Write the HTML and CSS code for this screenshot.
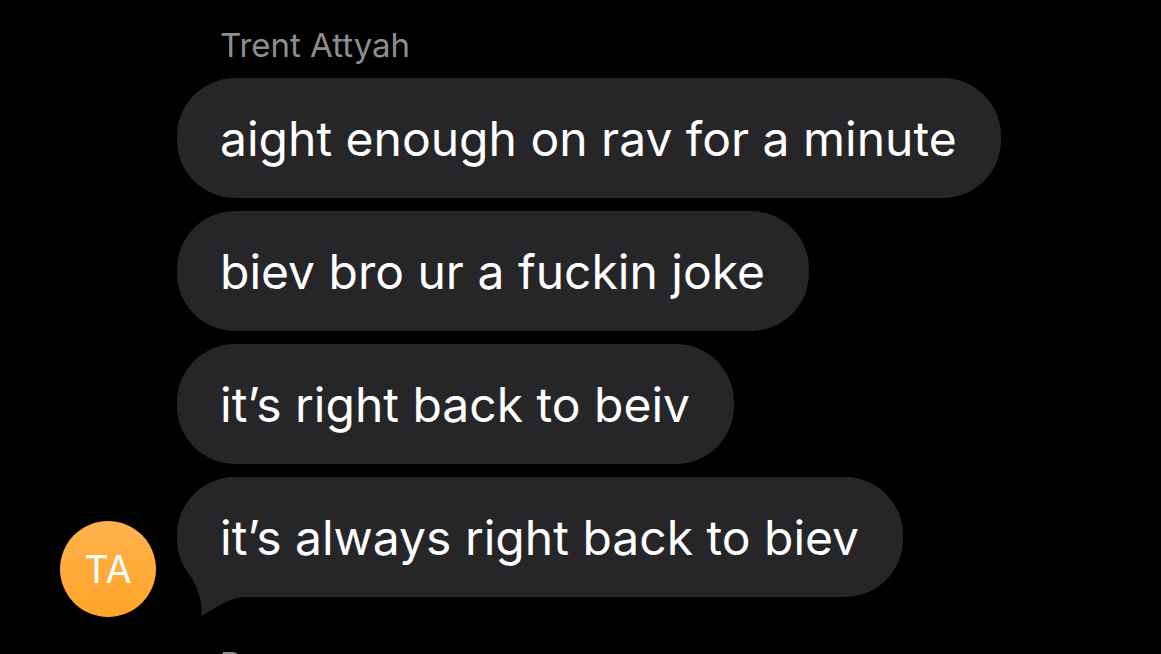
FILE: index.html
```html
<!DOCTYPE html>
<html>
<head>
<meta charset="utf-8">
<link rel="stylesheet" href="styles.css">
</head>
<body>
<div class="thread">
  <div class="group">
    <div class="sender">Trent Attyah</div>
    <div class="row">
      <div class="avatar">TA</div>
      <div class="stack">
        <div class="bubble">aight enough on rav for a minute</div>
        <div class="bubble">biev bro ur a fuckin joke</div>
        <div class="bubble">it’s right back to beiv</div>
        <div class="bubble last">it’s always right back to biev
          <svg class="tail" width="80" height="60" viewBox="0 80 80 60"><path d="M12 96 C20 110 27 126 24 139 C34 134 45 124 65 120 L40 110 Z" fill="#262628"/></svg>
        </div>
      </div>
    </div>
  </div>
  <div class="group">
    <div class="sender">Dan</div>
  </div>
</div>
</body>
</html>
```
FILE: styles.css
```css
html, body {
  margin: 0;
  background: #000;
  height: 100%;
  overflow: hidden;
}
.thread {
  padding: 22px 0 0 60px;
  font-family: Inter, "Noto Sans", sans-serif;
}
.sender {
  margin-left: 160px;
  font-size: 33px;
  line-height: 46px;
  color: #8e8e90;
  margin-bottom: 10px;
}
.row {
  display: flex;
  align-items: flex-end;
  gap: 21px;
}
.avatar {
  width: 96px;
  height: 96px;
  border-radius: 50%;
  background: linear-gradient(#ffb24e, #ffa428);
  color: #fff;
  font-size: 38px;
  display: flex;
  align-items: center;
  justify-content: center;
  flex-shrink: 0;
}
.stack {
  display: flex;
  flex-direction: column;
  align-items: flex-start;
  gap: 13px;
  padding-bottom: 20px;
}
.bubble {
  position: relative;
  height: 120px;
  box-sizing: border-box;
  padding: 0 44px 0 43px;
  display: flex;
  align-items: center;
  background: #262628;
  color: #fff;
  border-radius: 58px;
  font-size: 48px;
  white-space: nowrap;
}
.tail {
  position: absolute;
  left: 0;
  top: 80px;
}
.group + .group .sender {
  margin-top: 24px;
}
```
